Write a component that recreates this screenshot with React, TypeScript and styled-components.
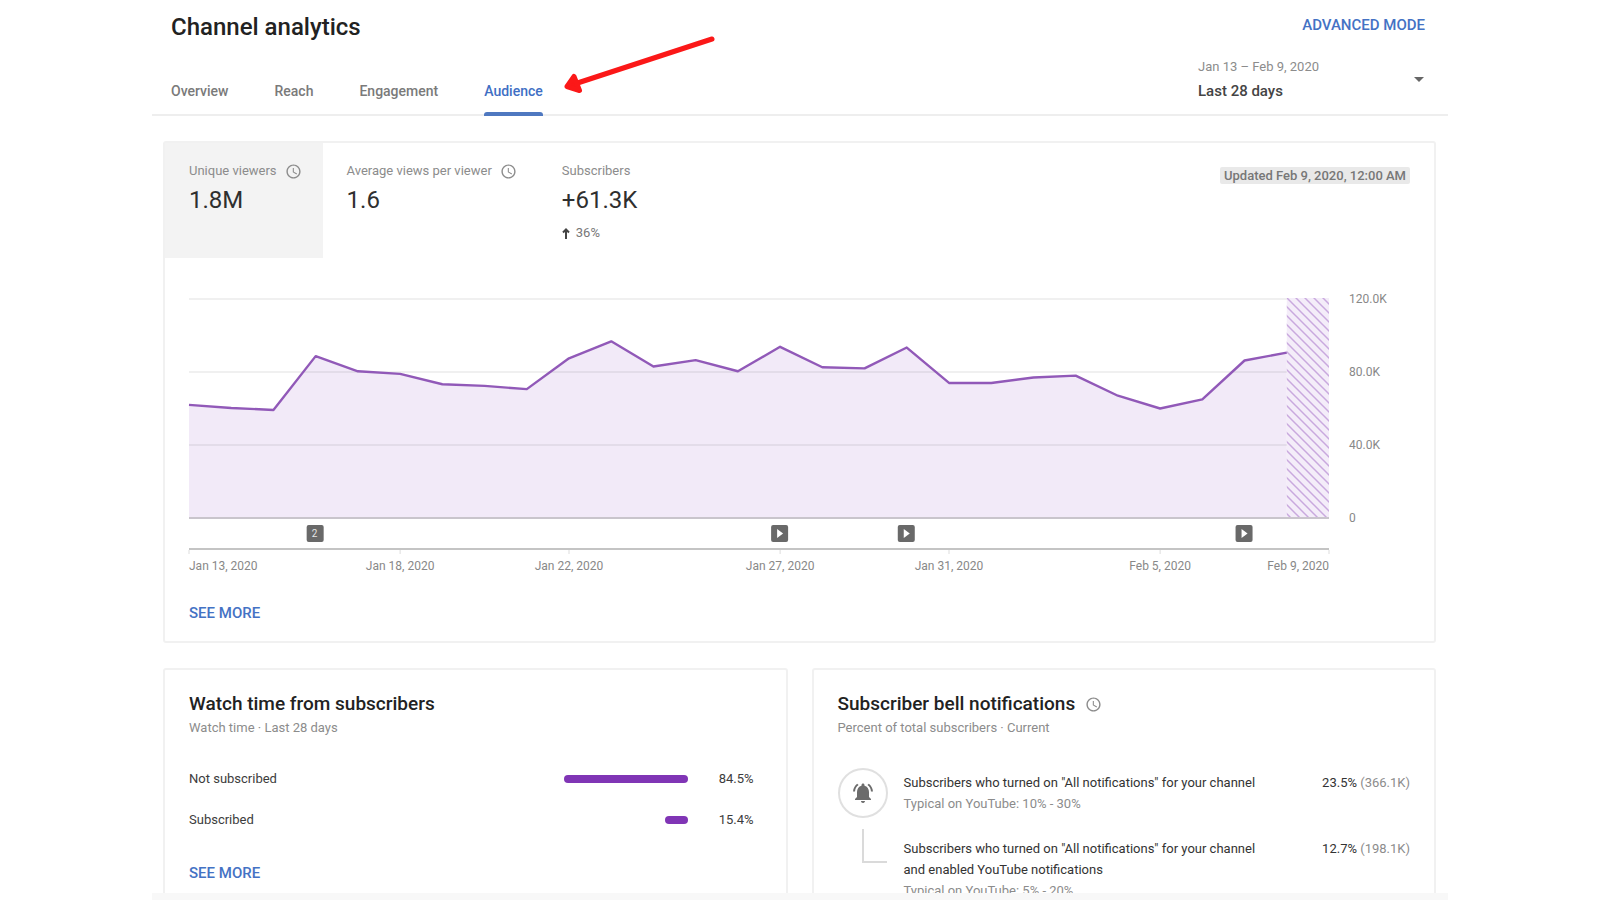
import React from "react";
import styled, { createGlobalStyle } from "styled-components";
import { MdAccessTime, MdArrowDropDown, MdNotificationsActive } from "react-icons/md";

const GlobalStyle = createGlobalStyle`
  *, *::before, *::after { box-sizing: border-box; }
  html, body { height: 100%; }
  body {
    margin: 0;
    background: #fff;
    color: #2f2f2f;
    font-family: Roboto, "Liberation Sans", sans-serif;
    font-size: 14px;
    line-height: 20px;
    overflow: hidden;
  }
  #root { height: 100%; }
  h1, h2, p, ul { margin: 0; padding: 0; }
  button { font: inherit; border: 0; padding: 0; background: none; cursor: pointer; text-align: left; }
  a { text-decoration: none; }
`;

const Page = styled.main`
  display: flex;
  flex-direction: column;
  max-width: 1296px;
  height: 100%;
  margin: 0 auto;
`;

const Header = styled.header`
  position: relative;
  display: flex;
  flex: none;
  justify-content: space-between;
  height: 116px;
  padding: 0 17px 0 19px;
  border-bottom: 2px solid #eee;
`;

const HeaderStart = styled.div`
  display: flex;
  flex-direction: column;
  justify-content: space-between;
  padding-top: 11px;
`;

const HeaderEnd = styled.div`
  display: flex;
  flex-direction: column;
  align-items: flex-end;
  width: 233px;
  padding-top: 15px;
`;

const Title = styled.h1`
  font-size: 24px;
  line-height: 32px;
  font-weight: 500;
  color: #222;
`;

const Tabs = styled.nav`
  display: flex;
  gap: 46px;
`;

const Tab = styled.a<{ $active?: boolean }>`
  height: 35px;
  margin-bottom: -2px;
  font-weight: 500;
  color: ${(p) => (p.$active ? "#3f6fc4" : "#7a7a7a")};
  &::after {
    content: "";
    display: block;
    height: 4px;
    margin-top: 11px;
    border-radius: 3px 3px 0 0;
    background: ${(p) => (p.$active ? "#4f78c0" : "transparent")};
  }
`;

const ActionLink = styled.a`
  font-size: 15px;
  font-weight: 500;
  color: #4472c4;
`;

const ModeLink = styled(ActionLink)`
  padding-right: 6px;
`;

const PeriodPicker = styled.button`
  display: flex;
  align-items: center;
  align-self: stretch;
  justify-content: space-between;
  margin-top: 22px;
  color: #666;
`;

const PeriodText = styled.span`
  display: flex;
  flex-direction: column;
  gap: 4px;
`;

const PeriodRange = styled.span`
  font-size: 13px;
  color: #8c8c8c;
`;

const PeriodName = styled.span`
  font-size: 15px;
  font-weight: 500;
  color: #444;
`;

const Arrow = styled.svg`
  position: absolute;
  left: 412px;
  top: 34px;
`;

const Content = styled.div`
  display: flex;
  flex: 1;
  min-height: 0;
  flex-direction: column;
  gap: 25px;
  padding: 25px 12px 0 11px;
  overflow: hidden;
`;

const Card = styled.section`
  flex: none;
  border: 2px solid #f1f1f1;
  border-radius: 3px;
  padding: 0 24px;
`;

const Metrics = styled.div`
  display: flex;
  margin-left: -24px;
`;

const Metric = styled.button<{ $selected?: boolean }>`
  display: flex;
  flex-direction: column;
  align-items: flex-start;
  height: 115px;
  padding: 18px 21px 0 24px;
  background: ${(p) => (p.$selected ? "#f3f3f3" : "transparent")};
`;

const MetricLabel = styled.span`
  display: flex;
  align-items: center;
  gap: 8px;
  font-size: 13px;
  color: #8c8c8c;
`;

const MetricValue = styled.span`
  margin-top: 5px;
  font-size: 24px;
  line-height: 28px;
  color: #2f2f2f;
`;

const MetricChange = styled.span`
  display: flex;
  align-items: center;
  gap: 6px;
  margin-top: 9px;
  font-size: 13px;
  color: #777;
`;

const Updated = styled.span`
  align-self: flex-start;
  margin: 24px 0 0 auto;
  padding: 0 4px;
  border-radius: 2px;
  background: #e9e9e9;
  font-size: 13px;
  line-height: 17px;
  font-weight: 500;
  color: #777;
`;

const Chart = styled.svg`
  display: block;
  width: 100%;
  margin-top: 40px;
  overflow: visible;
  text {
    font-size: 12px;
    fill: #888;
  }
`;

const CardFooter = styled.footer`
  display: flex;
  padding: 23px 0 18px;
`;

const Columns = styled.div`
  display: grid;
  flex: none;
  grid-template-columns: 1fr 1fr;
  gap: 24px;
`;

const CardTitle = styled.h2`
  display: flex;
  align-items: center;
  gap: 10px;
  padding-top: 20px;
  font-size: 19px;
  line-height: 28px;
  font-weight: 500;
  color: #222;
`;

const CardSubtitle = styled.p`
  font-size: 13px;
  color: #8c8c8c;
`;

const BarTable = styled.table`
  width: 100%;
  margin-top: 20px;
  border-collapse: collapse;
  font-size: 13px;
  color: #3c3c3c;
  th { padding: 0; font-weight: 400; text-align: left; }
  td { padding: 0; }
  tr { height: 41px; }
`;

const BarCell = styled.td`
  width: 124px;
`;

const Bar = styled.div`
  height: 8px;
  margin-left: auto;
  border-radius: 4px;
  background: #8035b5;
`;

const PercentCell = styled.td`
  width: 74px;
  text-align: right;
  && { padding-right: 8px; }
`;

const BellList = styled.ul`
  margin-top: 30px;
  list-style: none;
`;

const BellItem = styled.li`
  display: grid;
  grid-template-columns: 50px 1fr auto;
  column-gap: 16px;
  min-height: 66px;
  font-size: 13px;
  line-height: 21px;
  color: #333;
`;

const BellCircle = styled.span`
  display: flex;
  align-items: center;
  justify-content: center;
  width: 50px;
  height: 50px;
  border: 2px solid #e0e0e0;
  border-radius: 50%;
  color: #6c6c6c;
`;

const Branch = styled.span`
  width: 25px;
  height: 34px;
  margin: -5px 0 0 24px;
  border: solid #dadada;
  border-width: 0 0 2px 2px;
`;

const BellText = styled.div`
  max-width: 370px;
  padding-top: 4px;
`;

const BellValue = styled.div`
  padding-top: 4px;
`;

const Muted = styled.span`
  color: #8c8c8c;
`;

const BottomStrip = styled.div`
  flex: none;
  height: 7px;
  background: #f8f8f8;
`;

const TABS = ["Overview", "Reach", "Engagement", "Audience"];

const CHART_WIDTH = 1140;
const STEP = CHART_WIDTH / 27;
const BASE = 219;

const viewers = [
  62, 60.3, 59.2, 88.7, 80.4, 79, 73.3, 72.4, 70.6, 87.5, 96.8, 83, 86.5, 80.4,
  93.8, 82.6, 82, 93.4, 74, 74, 77, 78, 67, 60, 65, 86.3, 90.6,
];

const points = viewers.map((v, i) => `${i * STEP},${BASE + 1 - (v / 120) * BASE}`);

const gridLines = [
  { label: "120.0K", y: 1 },
  { label: "80.0K", y: 74 },
  { label: "40.0K", y: 147 },
];

const dates = [
  { day: 0, label: "Jan 13, 2020", anchor: "start" },
  { day: 5, label: "Jan 18, 2020", anchor: "middle" },
  { day: 9, label: "Jan 22, 2020", anchor: "middle" },
  { day: 14, label: "Jan 27, 2020", anchor: "middle" },
  { day: 18, label: "Jan 31, 2020", anchor: "middle" },
  { day: 23, label: "Feb 5, 2020", anchor: "middle" },
  { day: 27, label: "Feb 9, 2020", anchor: "end" },
] as const;

const uploads = [
  { day: 3, count: 2 },
  { day: 14, count: 1 },
  { day: 17, count: 1 },
  { day: 25, count: 1 },
];

function ViewersChart() {
  return (
    <Chart viewBox="0 0 1221 282" role="img" aria-label="Unique viewers per day">
      <defs>
        <pattern id="pending" width="9" height="9" patternUnits="userSpaceOnUse">
          <path d="M-2 -2L11 11M-2 7L2 11M7 -2L11 2" stroke="#c9a9de" strokeWidth="1.5" />
        </pattern>
      </defs>
      <polygon points={`0,${BASE} ${points.join(" ")} ${26 * STEP},${BASE}`} fill="#f2eaf8" />
      {gridLines.map((g) => (
        <g key={g.label}>
          <line x1="0" x2={CHART_WIDTH} y1={g.y} y2={g.y} stroke="#000" strokeOpacity="0.06" strokeWidth="2" />
          <text x="1160" y={g.y + 4}>{g.label}</text>
        </g>
      ))}
      <rect x={26 * STEP} y="0" width={STEP} height={BASE} fill="#f4edf9" />
      <rect x={26 * STEP} y="0" width={STEP} height={BASE} fill="url(#pending)" />
      <polyline points={points.join(" ")} fill="none" stroke="#9159b8" strokeWidth="2.4" strokeLinejoin="round" />
      <line x1="0" x2={CHART_WIDTH} y1="220" y2="220" stroke="#c9c5cc" strokeWidth="2" />
      <text x="1160" y="224">0</text>
      <line x1="0" x2={CHART_WIDTH} y1="251" y2="251" stroke="#c4c4c4" strokeWidth="2" />
      {uploads.map((u) => (
        <g key={u.day} transform={`translate(${u.day * STEP - 9} 227)`}>
          <rect width="17" height="17" rx="2" fill="#696969" />
          {u.count > 1 ? (
            <text x="8" y="12" textAnchor="middle" style={{ fill: "#e6e6e6", fontSize: 10 }}>{u.count}</text>
          ) : (
            <path d="M6 4L12 8.500L6 13Z" fill="#fff" />
          )}
        </g>
      ))}
      {dates.map((d) => (
        <g key={d.label}>
          <line x1={d.day * STEP} x2={d.day * STEP} y1="252" y2="256" stroke="#ddd" />
          <text x={d.day * STEP} y="272" textAnchor={d.anchor}>{d.label}</text>
        </g>
      ))}
    </Chart>
  );
}

const watchTime = [
  { label: "Not subscribed", value: "84.5%", share: 100 },
  { label: "Subscribed", value: "15.4%", share: 18.5 },
];

export default function App() {
  return (
    <>
      <GlobalStyle />
      <Page>
        <Header>
          <HeaderStart>
            <Title>Channel analytics</Title>
            <Tabs>
              {TABS.map((t) => (
                <Tab key={t} href={`#${t.toLowerCase()}`} $active={t === "Audience"}>{t}</Tab>
              ))}
            </Tabs>
          </HeaderStart>
          <Arrow width="152" height="62" viewBox="0 0 152 62" aria-hidden="true">
            <path d="M148 5L12 49.500" stroke="#fb1818" strokeWidth="5" strokeLinecap="round" />
            <path d="M3 52.500L10 42.500L15.500 56.500Z" fill="#fb1818" stroke="#fb1818" strokeWidth="5" strokeLinejoin="round" />
          </Arrow>
          <HeaderEnd>
            <ModeLink href="#advanced">ADVANCED MODE</ModeLink>
            <PeriodPicker type="button" aria-haspopup="listbox">
              <PeriodText>
                <PeriodRange>Jan 13 – Feb 9, 2020</PeriodRange>
                <PeriodName>Last 28 days</PeriodName>
              </PeriodText>
              <MdArrowDropDown size={24} />
            </PeriodPicker>
          </HeaderEnd>
        </Header>
        <Content>
          <Card>
            <Metrics>
              <Metric type="button" $selected>
                <MetricLabel>Unique viewers <MdAccessTime size={17} /></MetricLabel>
                <MetricValue>1.8M</MetricValue>
              </Metric>
              <Metric type="button">
                <MetricLabel>Average views per viewer <MdAccessTime size={17} /></MetricLabel>
                <MetricValue>1.6</MetricValue>
              </Metric>
              <Metric type="button">
                <MetricLabel>Subscribers</MetricLabel>
                <MetricValue>+61.3K</MetricValue>
                <MetricChange>
                  <svg width="8" height="11" viewBox="0 0 8 11" aria-hidden="true">
                    <path d="M4 11V2M1 4.500L4 1.500L7 4.500" fill="none" stroke="#444" strokeWidth="2" />
                  </svg>
                  36%
                </MetricChange>
              </Metric>
              <Updated>Updated Feb 9, 2020, 12:00 AM</Updated>
            </Metrics>
            <ViewersChart />
            <CardFooter>
              <ActionLink href="#viewers">SEE MORE</ActionLink>
            </CardFooter>
          </Card>
          <Columns>
            <Card>
              <CardTitle>Watch time from subscribers</CardTitle>
              <CardSubtitle>Watch time · Last 28 days</CardSubtitle>
              <BarTable>
                <tbody>
                  {watchTime.map((row) => (
                    <tr key={row.label}>
                      <th scope="row">{row.label}</th>
                      <BarCell><Bar style={{ width: `${row.share}%` }} /></BarCell>
                      <PercentCell>{row.value}</PercentCell>
                    </tr>
                  ))}
                </tbody>
              </BarTable>
              <CardFooter>
                <ActionLink href="#watch-time">SEE MORE</ActionLink>
              </CardFooter>
            </Card>
            <Card>
              <CardTitle>Subscriber bell notifications <MdAccessTime size={17} color="#8c8c8c" /></CardTitle>
              <CardSubtitle>Percent of total subscribers · Current</CardSubtitle>
              <BellList>
                <BellItem>
                  <BellCircle><MdNotificationsActive size={24} /></BellCircle>
                  <BellText>
                    <p>Subscribers who turned on "All notifications" for your channel</p>
                    <Muted>Typical on YouTube: 10% - 30%</Muted>
                  </BellText>
                  <BellValue>23.5% <Muted>(366.1K)</Muted></BellValue>
                </BellItem>
                <BellItem>
                  <Branch />
                  <BellText>
                    <p>Subscribers who turned on "All notifications" for your channel and enabled YouTube notifications</p>
                    <Muted>Typical on YouTube: 5% - 20%</Muted>
                  </BellText>
                  <BellValue>12.7% <Muted>(198.1K)</Muted></BellValue>
                </BellItem>
              </BellList>
            </Card>
          </Columns>
        </Content>
        <BottomStrip />
      </Page>
    </>
  );
}
